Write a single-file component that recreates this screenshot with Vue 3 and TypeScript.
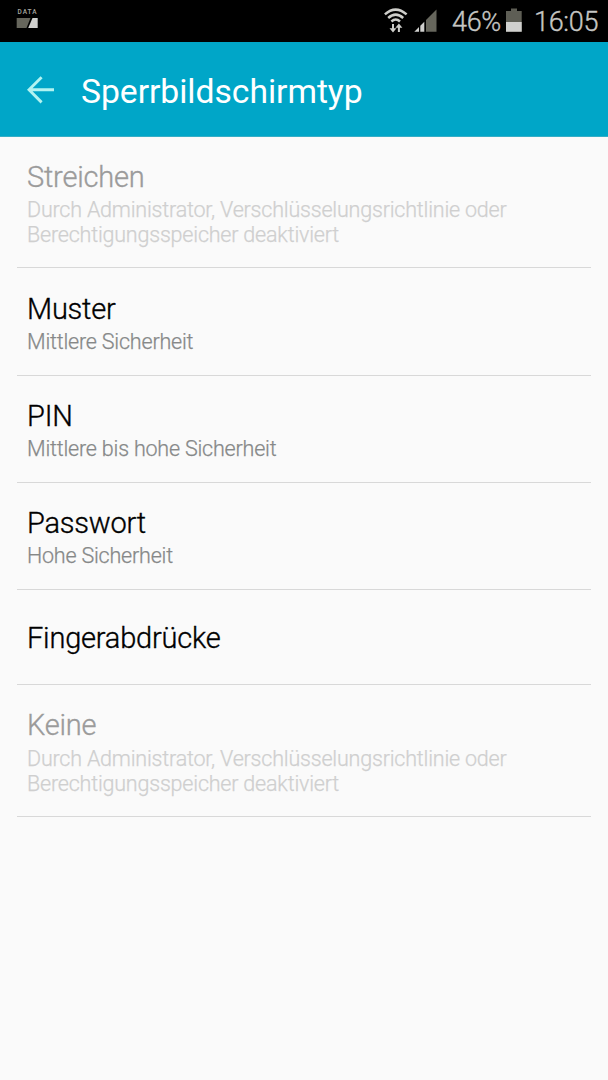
<script setup lang="ts">
interface LockOption {
  title: string
  lines: string[]
  disabled?: boolean
}

const blocked = ['Durch Administrator, Verschlüsselungsrichtlinie oder', 'Berechtigungsspeicher deaktiviert']
const options: LockOption[] = [
  { title: 'Streichen', lines: blocked, disabled: true },
  { title: 'Muster', lines: ['Mittlere Sicherheit'] },
  { title: 'PIN', lines: ['Mittlere bis hohe Sicherheit'] },
  { title: 'Passwort', lines: ['Hohe Sicherheit'] },
  { title: 'Fingerabdrücke', lines: [] },
  { title: 'Keine', lines: blocked, disabled: true },
]
</script>

<template>
  <div class="screen">
    <div class="status">
      <svg class="data" width="22" height="20" viewBox="0 0 22 20">
        <text x="1.500" y="5.200" font-size="6.500" font-weight="500" textLength="19" fill="#a8a8a0">DATA</text>
        <path d="M.7 9H14.500L10.500 19H.7Z" fill="#66665c" />
        <path d="M16.500 9H21.700V19H12.200Z" fill="#d0d0ce" />
      </svg>
      <svg class="wifi" width="24" height="26" viewBox="0 0 24 26" fill="none" stroke="#cececa" stroke-width="2.500">
        <path d="M.9 6.400Q11.500 -3.200 22.600 6.400M4.200 10Q11.700 3.200 19.200 10M7.400 13.500Q11.700 9.500 16 13.500" />
        <path d="M9 16V23M14.900 24V18" stroke-width="2" />
        <path d="M5.500 20.200H12.500L9 24.600ZM11.400 19.800H18.400L14.900 15.400Z" fill="#cececa" stroke="none" />
      </svg>
      <svg class="signal" width="23" height="23" viewBox="0 0 23 23">
        <path d="M.3 22.700L5 18V22.700ZM6.300 16.700L10.300 12.700V22.700H6.300Z" fill="#d0d0ce" />
        <path d="M12 11L22.500 .5V22.700H12Z" fill="#66665c" />
      </svg>
      <span class="percent">46%</span>
      <svg class="battery" width="16" height="24" viewBox="0 0 16 24">
        <path d="M5 .5H11V3H15.700V23.700H0V3H5Z" fill="#5e5e55" />
        <path d="M0 14H15.700V23.700H0Z" fill="#d0d0ce" />
      </svg>
      <span class="time">16:05</span>
    </div>
    <header class="bar">
      <svg width="28" height="28" viewBox="0 0 28 28" fill="none" stroke="#b2f3f1" stroke-width="2.900">
        <path d="M14.600 1.200L2 13.800L14.600 26.400M2 13.800H27" />
      </svg>
      <h1>Sperrbildschirmtyp</h1>
    </header>
    <main>
      <section v-for="o in options" :key="o.title" class="row" :class="{ disabled: o.disabled, single: !o.lines.length }">
        <h2>{{ o.title }}</h2>
        <p v-for="l in o.lines" :key="l">{{ l }}</p>
      </section>
    </main>
  </div>
</template>

<style>
body { margin: 0; background: #fafafa; }
</style>
<style scoped>
.screen { height: 1080px; overflow: hidden; background: #fafafa; font-family: Roboto, "Liberation Sans", sans-serif; }
.status { box-sizing: border-box; height: 42px; background: #000; display: flex; align-items: flex-start; padding: 0 0 0 16px; color: #c6c6c3; font-size: 27px; line-height: 45px; font-weight: 300; }
.status svg { flex: none; }
.data { margin-top: 9px; }
.wifi { margin: 8px 6px 0 auto; }
.signal { margin: 9px 15px 0 0; }
.percent { width: 54px; letter-spacing: -.3px; -webkit-text-stroke: .35px currentColor; }
.battery { margin: 8px 12px 0 0; }
.time { width: 74px; letter-spacing: -.3px; -webkit-text-stroke: .35px currentColor; }
.bar { box-sizing: border-box; height: 95px; background: #00a6c8; border-bottom: 1px solid #35aec6; display: flex; align-items: center; padding: 1px 0 0 27px; }
.bar svg { margin-left: -.5px; }
h1 { margin: 4px 0 0 26.500px; color: #fff; font-size: 33.700px; font-weight: 400; line-height: 40px; letter-spacing: -.05px; }
.row { box-sizing: border-box; height: 107px; margin: 0 17px; padding: 22px 10px 0; border-bottom: 1px solid #d8d8d8; }
.row.disabled { height: 132px; }
.row.disabled:first-child { height: 131px; margin-bottom: 1px; }
.row.single { height: 95px; padding-top: 30px; }
h2 { margin: 0 0 2px; color: #000; font-size: 29px; font-weight: 300; line-height: 37px; letter-spacing: -.2px; white-space: nowrap; -webkit-text-stroke: .35px currentColor; }
p { margin: 0; color: #868888; font-size: 21.500px; font-weight: 300; line-height: 24.500px; letter-spacing: -.2px; white-space: nowrap; -webkit-text-stroke: .25px currentColor; }
.row:last-child h2 { margin-bottom: 3px; }
.disabled h2 { color: #9b9b9b; }
.disabled p { color: #cfcfcf; }
</style>
